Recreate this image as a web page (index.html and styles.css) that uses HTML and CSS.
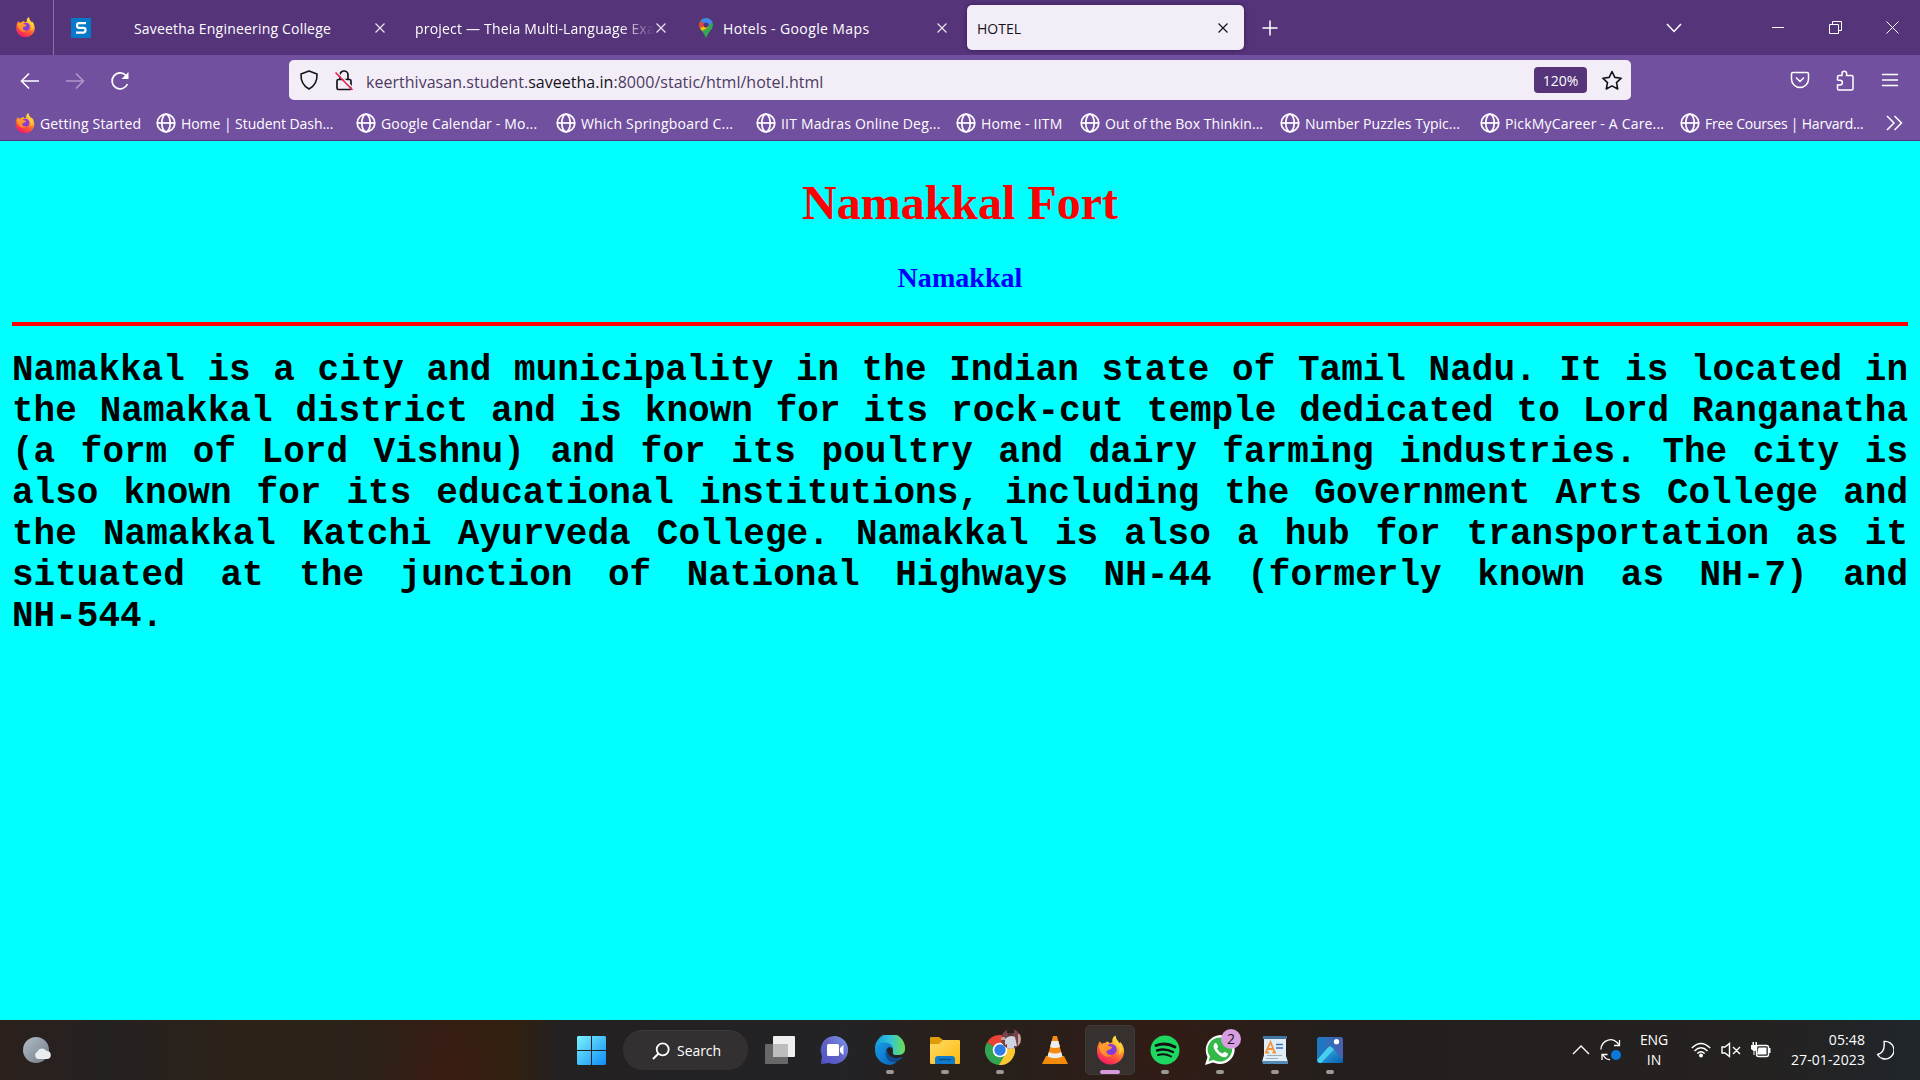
FILE: index.html
```html
<!DOCTYPE html>
<html lang="en">
<head>
<meta charset="utf-8">
<title>HOTEL</title>
<link rel="stylesheet" href="styles.css">
</head>
<body>
<svg class="defs" width="0" height="0" aria-hidden="true">
  <defs>
    <linearGradient id="ffBody" x1=".8" y1="0" x2=".3" y2="1"><stop offset="0" stop-color="#fff44f"/><stop offset=".35" stop-color="#ffb32c"/><stop offset=".65" stop-color="#ff5a36"/><stop offset="1" stop-color="#f5156c"/></linearGradient>
    <radialGradient id="ffCore"><stop offset="0" stop-color="#5b4be0"/><stop offset="1" stop-color="#a032d8"/></radialGradient>
    <linearGradient id="ffFox" x1="0" y1="0" x2="1" y2="1"><stop offset="0" stop-color="#ffa930"/><stop offset="1" stop-color="#ff7a28"/></linearGradient>
  </defs>
  <symbol id="firefox" viewBox="0 0 30 30">
    <path fill="url(#ffBody)" d="M4 6 Q5 8 6.500 8.500 Q8 7.200 10 7.500 Q12 4.500 14 8 L17 7 Q16 2.500 20 0 Q20.500 4 24.500 8 Q25.500 7.500 25 6.500 Q29 11 29 16 C29 24 23 30 15 30 C7 30 1 24 1 16 Q1 10 4 6Z"/>
    <circle cx="15.500" cy="14.500" r="6" fill="url(#ffCore)"/>
    <path fill="url(#ffFox)" d="M3 11 Q6 8 11 9 Q13 11 17 12 Q16 14.500 13 15 Q10.500 15 11 18 Q13 21 17 20 Q13 24 8.500 21 Q4 18 3 11Z"/>
    <path fill="#ffcf3a" d="M19 2 Q18 7 22 10 Q26 15 23 20 Q27 18 27 13 Q26 9 23 7 Q20 5 20 1Z"/>
  </symbol>
  <symbol id="globe" viewBox="0 0 20 20"><g fill="none" stroke="currentColor" stroke-width="1.700"><circle cx="10" cy="10" r="8.800"/><ellipse cx="10" cy="10" rx="4.200" ry="8.800"/><path d="M1.500 10H18.500"/></g></symbol>
  <symbol id="close" viewBox="0 0 12 12"><path d="M1.500 1.500L10.500 10.500M10.500 1.500L1.500 10.500" fill="none" stroke="currentColor" stroke-width="1.200"/></symbol>
</svg>

<header class="tabbar">
  <div class="tab-home"><svg width="21" height="20"><use href="#firefox"/></svg></div>
  <div class="tab-pinned"><svg width="20" height="20" viewBox="0 0 20 20"><path fill="#0679c9" d="M0 0H20V20H0Z"/><path d="M15 5.200H8Q6 5.200 6 7.500T8 9.800H12.500Q14.500 9.800 14.500 12T12.500 14.700H5" fill="none" stroke="#fff" stroke-width="2.200"/></svg></div>
  <div class="tab"><span class="tab-title">Saveetha Engineering College</span><svg class="x"><use href="#close"/></svg></div>
  <div class="tab"><span class="tab-title fade">project — Theia Multi-Language Exa</span><svg class="x"><use href="#close"/></svg></div>
  <div class="tab"><svg class="pin" width="14" height="20" viewBox="0 0 14 20"><path fill="#34a853" d="M0 7A7 7 0 0 1 14 7Q14 10 11 13Q8.500 16 7 20Q5.500 16 3 13Q0 10 0 7Z"/><path fill="#fbbc04" d="M1 10L7 7L10 9L3 13Z"/><path fill="#ea4335" d="M1.500 3L7 7L1 10Q-1 6 1.500 3Z"/><path fill="#4285f4" d="M2 2.500Q6-1 10 .7Q12.500 2 13.300 4L7 10L4.500 5Z"/><circle cx="7" cy="7" r="2.500" fill="#55347a"/></svg><span class="tab-title wide">Hotels - Google Maps</span><svg class="x"><use href="#close"/></svg></div>
  <div class="tab active"><span class="tab-title">HOTEL</span><svg class="x"><use href="#close"/></svg></div>
  <svg class="plus" width="16" height="16" viewBox="0 0 16 16"><path d="M8 .5V15.500M.5 8H15.500" stroke="#fff" stroke-width="1.500"/></svg>
  <div class="window-tools">
    <svg width="16" height="10" viewBox="0 0 16 10"><path d="M1 1L8 8.500L15 1" fill="none" stroke="#fff" stroke-width="1.500"/></svg>
    <svg class="min" width="12" height="12" viewBox="0 0 12 12"><path d="M0 5.500H12" stroke="#fff"/></svg>
    <svg class="restore" width="13" height="13" viewBox="0 0 13 13"><path d="M.5 3.500H9.500V12.500H.5ZM3.500 3.500V.5H12.500V9.500H9.500" fill="none" stroke="#fff"/></svg>
    <svg class="quit" width="13" height="13" viewBox="0 0 13 13"><path d="M.5 .5L12.500 12.500M12.500 .5L.5 12.500" stroke="#fff"/></svg>
  </div>
</header>

<nav class="toolbar">
  <div class="nav-buttons">
    <svg width="20" height="18" viewBox="0 0 20 18"><path d="M19 9H2M9 1.500L1.500 9L9 16.500" fill="none" stroke="#fff" stroke-width="1.600"/></svg>
    <svg class="off" width="20" height="18" viewBox="0 0 20 18"><path d="M1 9H18M11 1.500L18.500 9L11 16.500" fill="none" stroke="#fff" stroke-width="1.600"/></svg>
    <svg width="20" height="20" viewBox="0 0 20 20"><path d="M17.500 13A8 8 0 1 1 16 4.500" fill="none" stroke="#fff" stroke-width="1.700"/><path fill="#fff" d="M18.500 1V8H11.500Z"/></svg>
  </div>
  <div class="urlbar">
    <svg width="20" height="20" viewBox="0 0 20 20"><path d="M10 1L18 4Q18.500 14.500 10 19Q1.500 14.500 2 4Z" fill="none" stroke="#15141a" stroke-width="1.600" stroke-linejoin="round"/></svg>
    <svg class="lock" width="20" height="21" viewBox="0 0 20 21"><path d="M6 9.500V5A4 4 0 0 1 14 5V9.500M4.500 9.500H15.500Q17 9.500 17 11V18Q17 19.500 15.500 19.500H4.500Q3 19.500 3 18V11Q3 9.500 4.500 9.500" fill="none" stroke="#15141a" stroke-width="1.700"/><path d="M2.500 1.500L20 19" stroke="#f3edf7" stroke-width="1.500"/><path d="M1.500 2.500L18.500 20" stroke="#e22850" stroke-width="1.700"/></svg>
    <span class="url">keerthivasan.student.<b>saveetha.in</b>:8000/static/html/hotel.html</span>
    <span class="zoom">120%</span>
    <svg width="22" height="21" viewBox="0 0 22 21"><path d="M11 1.500L13.800 7.400L20.200 8.200L15.500 12.600L16.700 19L11 15.900L5.300 19L6.500 12.600L1.800 8.200L8.200 7.400Z" fill="none" stroke="#15141a" stroke-width="1.600" stroke-linejoin="round"/></svg>
  </div>
  <div class="menu-buttons">
    <svg width="20" height="18" viewBox="0 0 20 18"><path d="M3 1.500H17Q18.500 1.500 18.500 3V8A8.500 8.500 0 0 1 1.500 8V3Q1.500 1.500 3 1.500M6 6.500L10 10.500L14 6.500" fill="none" stroke="#fff" stroke-width="1.500"/></svg>
    <svg width="20" height="21" viewBox="0 0 20 21"><path d="M2.500 10.200V7Q2.500 5.500 4 5.500H7V3.500A2.300 2.300 0 0 1 11.600 3.500V5.500H16.500Q18 5.500 18 7V18.500Q18 20 16.500 20H4Q2.500 20 2.500 18.500V15H5A2.300 2.300 0 0 0 5 10.200H2.500" fill="none" stroke="#fff" stroke-width="1.500"/></svg>
    <svg width="20" height="14" viewBox="0 0 20 14"><path d="M2.500 1.500H17.500M2.500 7H17.500M2.500 12.500H17.500" stroke="#fff" stroke-width="1.400" stroke-linecap="round"/></svg>
  </div>
</nav>

<nav class="bookmarks">
  <a class="b-first"><svg><use href="#firefox"/></svg><span>Getting Started</span></a>
  <a class="b-tight"><svg><use href="#globe"/></svg><span>Home | Student Dash...</span></a>
  <a class="b-wide"><svg><use href="#globe"/></svg><span>Google Calendar - Mo...</span></a>
  <a class="b-wide"><svg><use href="#globe"/></svg><span>Which Springboard C...</span></a>
  <a class="b-wide"><svg><use href="#globe"/></svg><span>IIT Madras Online Deg...</span></a>
  <a class="b-short b-wide"><svg><use href="#globe"/></svg><span>Home - IITM</span></a>
  <a><svg><use href="#globe"/></svg><span>Out of the Box Thinkin...</span></a>
  <a><svg><use href="#globe"/></svg><span>Number Puzzles Typic...</span></a>
  <a class="b-wide"><svg><use href="#globe"/></svg><span>PickMyCareer - A Care...</span></a>
  <a class="b-narrow"><svg><use href="#globe"/></svg><span>Free Courses | Harvard...</span></a>
  <svg class="more" width="17" height="16" viewBox="0 0 17 16"><path d="M1 1L8 8L1 15M8.500 1L15.500 8L8.500 15" fill="none" stroke="#fff" stroke-width="1.500"/></svg>
</nav>

<main class="page">
  <h1>Namakkal Fort</h1>
  <h3>Namakkal</h3>
  <hr>
  <p>Namakkal is a city and municipality in the Indian state of Tamil Nadu. It is located in the Namakkal district and is known for its rock-cut temple dedicated to Lord Ranganatha (a form of Lord Vishnu) and for its poultry and dairy farming industries. The city is also known for its educational institutions, including the Government Arts College and the Namakkal Katchi Ayurveda College. Namakkal is also a hub for transportation as it situated at the junction of National Highways NH-44 (formerly known as NH-7) and <span class="road">NH-544.</span></p>
</main>

<footer class="taskbar">
  <div class="weather"><svg width="28" height="28" viewBox="0 0 28 28"><defs><linearGradient id="moonG" x1="0" y1="0" x2="1" y2="1"><stop offset="0" stop-color="#b4bec8"/><stop offset="1" stop-color="#717b86"/></linearGradient></defs><circle cx="13" cy="14" r="13" fill="url(#moonG)"/><path fill="#e9edf2" d="M15 23A4 4 0 0 1 14.500 15.500A5 5 0 0 1 23.500 15A4 4 0 0 1 24 23Z"/></svg></div>
  <div class="start"><svg width="29" height="29" viewBox="0 0 29 29"><defs><linearGradient id="winG" gradientUnits="userSpaceOnUse" x1="0" y1="0" x2="29" y2="29"><stop offset="0" stop-color="#7df3ff"/><stop offset="1" stop-color="#0c8cf5"/></linearGradient></defs><path fill="url(#winG)" d="M1 0H14V14H0V1ZM15 0H28L29 1V14H15ZM0 15H14V29H1L0 28ZM15 15H29V28L28 29H15Z"/></svg></div>
  <div class="search"><svg width="18" height="18" viewBox="0 0 18 18"><circle cx="10.700" cy="7.300" r="6" fill="none" stroke="#fff" stroke-width="1.800"/><path d="M6.500 11.500L1 17" stroke="#fff" stroke-width="2"/></svg><span>Search</span></div>
  <div class="apps">
    <div class="app"><svg width="30" height="30" viewBox="0 0 30 30"><rect x="8" y="1" width="22" height="21" rx="1" fill="#efefef"/><rect y="9" width="23" height="20" rx="1" fill="#747474" opacity=".85"/><path d="M8 9H23V22H8Z" fill="#bdbdbd"/></svg></div>
    <div class="app"><svg width="30" height="30" viewBox="0 0 30 30"><defs><linearGradient id="chatG" x1="0" y1="1" x2="1" y2="0"><stop offset="0" stop-color="#5053c8"/><stop offset=".5" stop-color="#6263c4"/><stop offset="1" stop-color="#7f9bee"/></linearGradient></defs><path fill="url(#chatG)" d="M15 1A14 14 0 1 1 9 28L1 29L2 21A14 14 0 0 1 15 1Z"/><rect x="7" y="9" width="12" height="12" rx="1.500" fill="#fff"/><path fill="#fff" d="M20 13L23.500 10V20L20 17Z"/></svg></div>
    <div class="app run"><svg width="30" height="30" viewBox="0 0 30 30"><defs><linearGradient id="edgeG"><stop offset="0" stop-color="#1598da"/><stop offset=".5" stop-color="#32c3d9"/><stop offset="1" stop-color="#6de04e"/></linearGradient><linearGradient id="edgeB" x1="0" y1="0" x2="1" y2="1"><stop offset="0" stop-color="#159ee5"/><stop offset="1" stop-color="#0861b9"/></linearGradient></defs><path fill="url(#edgeG)" d="M0 15A15 15 0 0 1 30 12Q31 21 21 20Q17 20 18 16Q18 8 9 8Q2 9 0 15Z"/><path fill="url(#edgeB)" d="M0 15Q2 7 10 7.500Q18 8 18 15Q17 12 14 12Q10 14 11 20Q13 27 22 27Q18 30 15 30A15 15 0 0 1 0 15Z"/><path fill="#124b8e" d="M13 13Q8 19 13 25Q19 30 26 24Q29 21 26.500 22Q19 25 14 20Q11 16 13 13Z"/></svg></div>
    <div class="app run"><svg width="30" height="30" viewBox="0 0 30 30"><defs><linearGradient id="foldG" x1="0" y1="0" x2="1" y2="1"><stop offset="0" stop-color="#ffdb67"/><stop offset="1" stop-color="#fdb90c"/></linearGradient></defs><path fill="#df9c08" d="M0 3Q0 2 1 2H9L13 5V12H0Z"/><path fill="url(#foldG)" d="M0 9H9L13 5H29Q30 5 30 6V28Q30 29 29 29H1Q0 29 0 28Z"/><path fill="#107acb" d="M5 29V24Q5 21 8 21H22Q25 21 25 24V29Z"/><path d="M9 24.500H21" stroke="#054c88" stroke-width="1.400"/></svg></div>
    <div class="app run"><svg width="30" height="30" viewBox="0 0 30 30"><path fill="#ea4335" d="M15 15L2 7.500A15 15 0 0 1 28 7.500Z"/><path fill="#32a350" d="M2 7.500A15 15 0 0 0 15 30L21 18.500L15 15Z"/><path fill="#fdc82f" d="M28 7.500A15 15 0 0 1 14 30L21 18Q22 12 17 7.500Z"/><circle cx="15" cy="15" r="7.300" fill="#fff"/><circle cx="15" cy="15" r="5.700" fill="#2f7de9"/></svg><svg class="avatar" width="20" height="20" viewBox="0 0 20 20"><defs><clipPath id="avC"><circle cx="10" cy="10" r="10"/></clipPath></defs><g clip-path="url(#avC)"><path fill="#754249" d="M0 0H20V20H0Z"/><path fill="#bfa49c" d="M17 5H20V17H17ZM0 8H4V11H0Z"/><path fill="#ccd4df" d="M4 10Q9 5 14 8L16 17H13V20H6V15L4 16Z"/><path fill="#55352f" d="M7 2H12V7H7Z"/><path fill="#251c20" d="M6 0H13V4H6Z"/></g></svg></div>
    <div class="app"><svg width="26" height="28" viewBox="0 0 26 28"><path fill="#f28a0a" d="M4 20H22L26 28H0Z"/><path fill="#f58b13" d="M11 0H15L21 23Q13 27 5 23Z"/><path fill="#eee" d="M9.600 5H16.400L18 11Q13 13 8 11ZM6.800 16Q13 19 19.200 16L20.500 20.500Q13 24 5.500 20.500Z"/></svg></div>
    <div class="app run current"><svg width="29" height="30"><use href="#firefox"/></svg></div>
    <div class="app run"><svg width="30" height="30" viewBox="0 0 30 30"><circle cx="15" cy="15" r="14.500" fill="#1ed760"/><path d="M6 10.500Q16 7 25 12" fill="none" stroke="#111" stroke-width="2.900" stroke-linecap="round"/><path d="M7 15.500Q15 13 23 17" fill="none" stroke="#111" stroke-width="2.400" stroke-linecap="round"/><path d="M8 20Q15 18 21 21.500" fill="none" stroke="#111" stroke-width="2" stroke-linecap="round"/></svg></div>
    <div class="app run"><svg width="30" height="30" viewBox="0 0 30 30"><path fill="#fff" d="M15 0A15 14.500 0 1 1 8 27.500L0 30L2.500 22A15 15 0 0 1 15 0Z"/><path fill="#34b848" d="M15 2.500A12.300 12 0 1 1 8.500 24.800L3.500 26.500L5 21.500A12.300 12 0 0 1 15 2.500Z"/><path fill="#fff" d="M9 9Q11 7 12 9L13 11.500Q13 12.500 12 13.500Q13.500 17 17.500 18.500L19.500 16.800L23 18.500Q23.500 20 21 22Q18 23.500 12.500 18.500Q7 13 9 9Z"/></svg><span class="badge">2</span></div>
    <div class="app run"><svg width="26" height="28" viewBox="0 0 26 28"><path fill="#deedf7" d="M2 0H24V20L26 26H0L2 19Z"/><path fill="#40769f" d="M1 0H25V3H1Z"/><path fill="#5488b5" d="M0 25H26V28H1Z"/><path d="M4 16L8.500 6L12.500 16M5.500 13H11M3 16.500H7M10.500 16.500H14" stroke="#f2943c" stroke-width="1.800" fill="none"/><path d="M14 8.500H21M14 12H21" stroke="#3c73c1" stroke-width="1.700"/><path d="M5 19.500H20M4 22.500H16" stroke="#a2adb8"/></svg></div>
    <div class="app run"><svg width="26" height="26" viewBox="0 0 26 26"><defs><linearGradient id="phG" x1="0" y1="0" x2="1" y2="1"><stop offset="0" stop-color="#43bef4"/><stop offset="1" stop-color="#075ead"/></linearGradient><linearGradient id="phS" x1="0" y1="0" x2="1" y2="0"><stop offset="0" stop-color="#187bc5"/><stop offset="1" stop-color="#4b5faf"/></linearGradient></defs><rect width="26" height="26" rx="2.500" fill="url(#phS)"/><path fill="url(#phG)" d="M1 22L11 10.500Q13 8.500 15 10.500L26 22V24Q26 26 24 26H3Q1 26 1 24Z"/><path fill="#45cfee" d="M1 22L11 10.500Q13 8.500 15 10.500L17 12.500L4 26H3Q1 26 0 23Z"/><circle cx="19.500" cy="4.700" r="2.600" fill="#fff"/></svg></div>
  </div>
  <div class="tray">
    <svg width="18" height="10" viewBox="0 0 18 10"><path d="M1 9L9 1L17 9" fill="none" stroke="#fff" stroke-width="1.400"/></svg>
    <svg class="sync" width="22" height="22" viewBox="0 0 22 22"><path d="M1 10.500A9.500 9.500 0 0 1 19 6M19.500 1V6.500H14M2 21V15.500H7.500M3 16Q6 21 10 20.500" fill="none" stroke="#fff" stroke-width="1.300"/><circle cx="16" cy="16" r="5" fill="#0878d9"/></svg>
    <div class="lang"><div>ENG</div><div>IN</div></div>
    <svg class="wifi" width="20" height="16" viewBox="0 0 20 16"><path d="M.8 6Q10-3 19.200 6M3.500 9Q10 2.500 16.500 9M6.300 11.500Q10 8 13.700 11.500" fill="none" stroke="#fff" stroke-width="1.500"/><circle cx="10" cy="13.500" r="2" fill="#fff"/></svg>
    <svg class="vol" width="20" height="16" viewBox="0 0 20 16"><path d="M1 5H4L8.500 1.500V14.500L4 11H1ZM12 5L19 12M19 5L12 12" fill="none" stroke="#fff" stroke-width="1.400"/></svg>
    <svg class="bat" width="20" height="16" viewBox="0 0 20 16"><path fill="#fff" d="M0 3H1.500V0H3V3H4.500V0H6V8Q5 9 3.500 9V13H2.500V9L0 7ZM18 6H19.500V11H18Z"/><rect x="5.500" y="3.500" width="12" height="11" rx="2" fill="none" stroke="#fff" stroke-width="1.400"/><path fill="#fff" d="M7.500 5.500H15.500V12.500H6Z"/></svg>
    <div class="clock"><div>05:48</div><div>27-01-2023</div></div>
    <svg class="night" width="18" height="20" viewBox="0 0 18 20"><path d="M8 1.500A8.800 8.800 0 1 1 1.500 14.500Q9.500 12.500 8 1.500Z" fill="none" stroke="#fff" stroke-width="1.400" stroke-linejoin="round"/></svg>
  </div>
</footer>
</body>
</html>
```

FILE: styles.css
```css
* { box-sizing: border-box; }
html, body { margin: 0; width: 1920px; height: 1080px; overflow: hidden; }
body { display: flex; flex-direction: column; font-family: "Open Sans", "Noto Sans", sans-serif; font-size: 14px; color: #fff; }
svg { display: block; flex: none; }
.defs { position: absolute; }

.tabbar { height: 55px; flex: none; background: #55347a; display: flex; align-items: center; }
.tab-home { width: 54px; height: 55px; padding: 17px 0 0 15px; border-right: 1px solid #8b6faa; }
.tab-pinned { width: 70px; padding-left: 17px; }
.tab { width: 277px; height: 45px; margin-right: 4px; padding: 0 15px 0 10px; display: flex; align-items: center; border-radius: 5px; }
.tab-title { flex: 1; min-width: 0; white-space: nowrap; line-height: 20px; letter-spacing: 0.19px; padding-top: 2px; }
.tab-title.wide { letter-spacing: 0.38px; }
.tab .x { width: 12px; height: 12px; color: #e9e2f0; }
.tab .pin { margin: 0 10px 0 3px; }
.fade { -webkit-mask-image: linear-gradient(to right, #000 205px, transparent 240px); mask-image: linear-gradient(to right, #000 205px, transparent 240px); }
.tab.active { background: #f3edf7; color: #15141a; box-shadow: 0 0 4px #321b50; }
.tab.active .tab-title { letter-spacing: 0; }
.tab.active .x { color: #15141a; }
.plus { margin-left: 14px; }
.window-tools { margin-left: auto; display: flex; align-items: center; padding-right: 22px; }
.min { margin-left: 90px; }
.restore { margin-left: 45px; }
.quit { margin-left: 44px; }
.window-tools { padding-right: 21px; }

.toolbar { height: 51px; flex: none; background: #7250a0; display: flex; padding-top: 5px; }
.nav-buttons { width: 289px; height: 42px; padding-left: 20px; display: flex; align-items: center; gap: 25px; }
.off { opacity: .42; }
.urlbar { width: 1342px; height: 40px; background: #f3edf7; border-radius: 5px; color: #15141a; display: flex; align-items: center; padding: 0 8px 0 10px; }
.lock { margin-left: 15px; }
.url { flex: 1; margin-left: 12px; padding-top: 4px; font-size: 16px; letter-spacing: 0.03px; color: #4c3b63; }
.url b { font-weight: 400; color: #15141a; }
.zoom { width: 53px; height: 26px; background: #55347a; color: #fff; border-radius: 4px; text-align: center; line-height: 27px; font-size: 14px; margin-right: 14px; }
.menu-buttons { flex: 1; height: 40px; display: flex; align-items: center; justify-content: flex-end; gap: 25px; padding-right: 20px; }

.bookmarks { height: 35px; flex: none; background: #7250a0; border-bottom: 1px solid #55347a; display: flex; align-items: center; padding-left: 15px; }
.bookmarks a { width: 200px; display: flex; align-items: center; gap: 5px; white-space: nowrap; letter-spacing: 0.03px; }
.bookmarks a svg { width: 20px; height: 20px; margin-left: -1px; }
.bookmarks a.b-first { width: 142px; letter-spacing: 0.15px; }
.bookmarks a.b-first svg { margin-left: 0; }
.bookmarks a.b-wide { letter-spacing: 0.18px; }
.bookmarks a.b-tight { letter-spacing: -0.06px; }
.bookmarks a.b-narrow { letter-spacing: -0.22px; }
.bookmarks a.b-short { width: 124px; }
.more { margin-left: 5px; }

.page { height: 879px; flex: none; background: #0ff; color: #000; padding: 0 12px; overflow: hidden; font-family: "Liberation Serif", serif; font-size: 24px; }
.page h1 { margin: 34px 0 0; font-size: 48px; line-height: 55px; text-align: center; color: red; }
.page h3 { margin: 31px 0 0; font-size: 28.08px; line-height: 33px; text-align: center; color: blue; }
.page hr { margin: 28px 0 0; height: 4px; border: 0; background: red; }
.page p { margin: 24px 0 0; font: bold 36px/41px "Liberation Mono", monospace; text-align: justify; }
.road { white-space: nowrap; }

.taskbar { height: 60px; flex: none; display: flex; align-items: center; background: radial-gradient(circle at 450px 65px, #42191466 0, #42191400 70px), radial-gradient(circle at 1165px 30px, #321c15 0, #321c1500 160px), linear-gradient(to right, #2b211d 0, #252121 110px, #2c2218 240px, #2b2219 350px, #351d13 450px, #31200f 515px, #232122 560px, #232225 850px, #29201b 940px, #241f1d 1350px, #252120 1750px, #20262b 1920px); }
.weather { width: 577px; padding-left: 23px; }
.start { width: 46px; }
.search { width: 125px; height: 40px; border-radius: 20px; background: #333031; border-top: 1px solid #403b3b; display: flex; align-items: center; gap: 7px; padding-left: 29px; letter-spacing: -0.05px; }
.apps { display: flex; margin-left: 4px; }
.app { position: relative; width: 55px; height: 50px; display: flex; align-items: center; justify-content: center; }
.run::after { content: ""; position: absolute; left: 24px; bottom: 1px; width: 8px; height: 4px; border-radius: 2px; background: #9b9896; }
.current { width: 50px; margin: 0 2px 0 3px; background: #36302f; border: 1px solid #413937; border-radius: 5px; }
.current::after { left: 14px; bottom: 0; width: 20px; background: #d79ade; }
.avatar { position: absolute; left: 29px; top: 4px; }
.badge { position: absolute; left: 29px; top: 4px; width: 20px; height: 20px; border-radius: 50%; background: #d99ee2; color: #1b1420; text-align: center; line-height: 20px; font-size: 14px; }
.tray { margin-left: auto; width: 348px; display: flex; align-items: center; line-height: 20px; }
.sync { margin-left: 10px; }
.lang { width: 40px; margin-left: 12px; text-align: center; letter-spacing: -0.1px; }
.wifi { margin-left: 17px; }
.vol { margin-left: 10px; }
.bat { margin-left: 10px; }
.clock { width: 94px; text-align: right; letter-spacing: 0.1px; }
.night { margin-left: 11px; }
```
